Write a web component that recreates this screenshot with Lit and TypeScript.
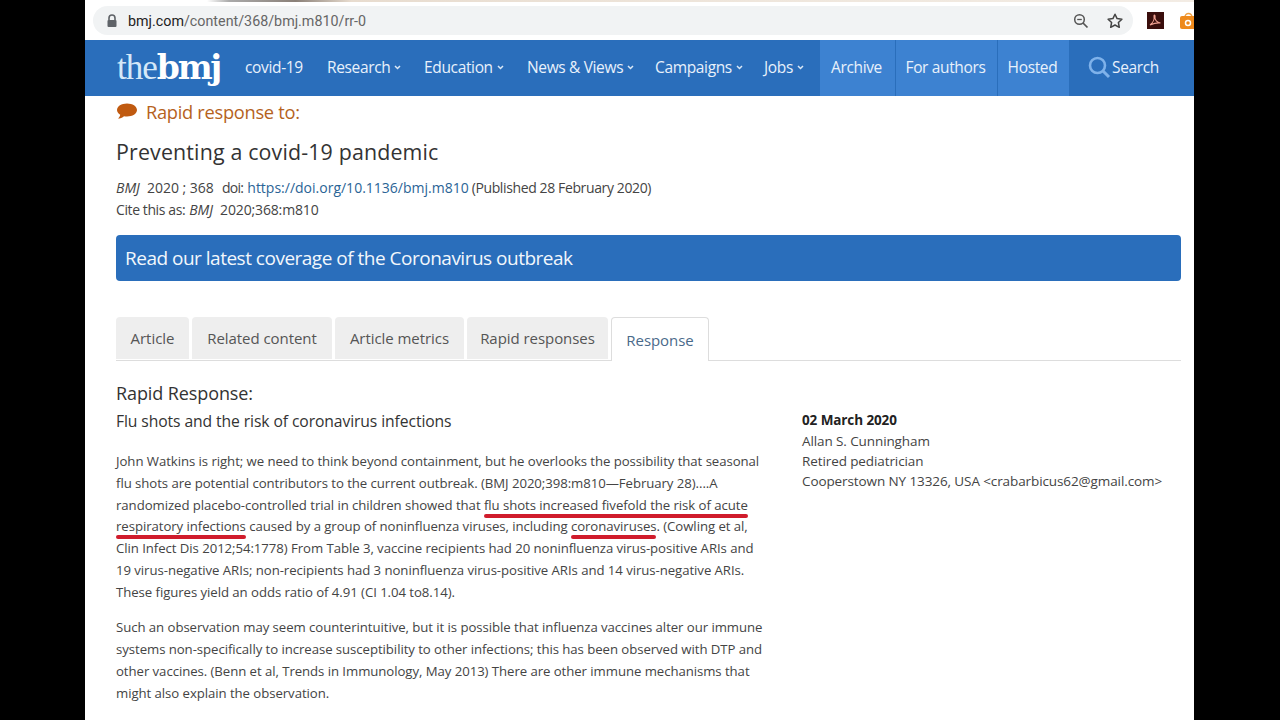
import { LitElement, html, css, svg } from "lit";
import { customElement } from "lit/decorators.js";

@customElement("app-root")
export class AppRoot extends LitElement {
  static styles = css`
    :host { display: block; width: 1280px; height: 720px; background: #000; overflow: hidden; font-family: "Open Sans", "Noto Sans", sans-serif; }
    .page { width: 1109px; height: 720px; margin-left: 85px; background: #fff; overflow: hidden; display: flex; flex-direction: column; }
    .chrome { height: 40px; flex: none; background: linear-gradient(90deg, #fff 11%, #aaa 13%, #8a8078 19%, #e8dccf 24%, #efe6dc 60%, #f3ece4 100%) top left / 100% 2px no-repeat, #fff; display: flex; align-items: flex-end; padding: 0 0 5px 8px; box-sizing: border-box; overflow: hidden; }
    .omni { width: 1040px; height: 29px; background: #f1f3f4; border-radius: 15px; display: flex; align-items: center; flex: none; }
    .lock { margin-left: 13px; width: 12px; height: 14px; }
    .url { margin-left: 10px; font: 14.3px "Roboto", sans-serif; color: #666; flex: 1; }
    .url b { font-weight: 400; color: #222; }
    .omni svg.z { width: 18px; height: 18px; margin-right: 16px; }
    .omni svg.s { width: 18px; height: 18px; margin-right: 9px; }
    .ext { display: flex; gap: 16px; margin-left: 14px; height: 29px; align-items: center; flex: none; }
    .ext svg { width: 17px; height: 17px; flex: none; }
    nav { height: 56px; flex: none; background: #2a6ebb; display: flex; align-items: center; color: #e8f1fb; font-size: 15.5px; letter-spacing: -0.35px; }
    .logo { margin-left: 32px; width: 128px; flex: none; display: flex; align-items: baseline; color: #d5e8f8; font: 35px "Liberation Serif", serif; letter-spacing: -1px; height: 56px; line-height: 55px; }
    .logo b { color: #fff; font: 900 33px "DejaVu Serif", serif; letter-spacing: -2.2px; }
    .item { display: flex; align-items: center; height: 56px; padding-bottom: 2px; box-sizing: border-box; white-space: nowrap; flex: none; }
    .caret { width: 7px; height: 5px; margin-left: 4px; }
    .light { background: #3d82d1; border-left: 1px solid #2a6ebb; padding-right: 2px; justify-content: center; flex: none; }
    .search { flex: 1; padding-left: 18px; gap: 1px; }
    .search svg { width: 24px; height: 24px; }
    main { padding: 0 13px 0 31px; flex: 1; min-height: 0; }
    .rr { display: flex; align-items: center; height: 32px; padding-bottom: 2px; box-sizing: border-box; color: #b5621d; font-size: 18.3px; letter-spacing: -0.3px; }
    .rr svg { width: 22px; height: 20px; margin-right: 8px; }
    h1 { font-weight: 400; font-size: 21.4px; color: #333; margin: 9px 0 0; line-height: 29px; letter-spacing: 0.15px; }
    .meta { margin-top: 11px; font-size: 14px; line-height: 22px; color: #444; letter-spacing: 0; white-space: nowrap; }
    .meta div { display: flex; }
    .meta i { margin-right: 7px; }
    .meta span { margin-right: 8px; }
    .meta a { color: #2a6496; margin-right: 3px; }
    .meta .l { margin-right: 4px; letter-spacing: -0.7px; }
    .meta .pub { letter-spacing: -0.38px; }
    .meta .cite { margin-right: 4px; letter-spacing: -0.4px; }
    .meta .yr { letter-spacing: -0.15px; }
    .banner { margin-top: 14px; height: 46px; background: #2a6ebb; border-radius: 4px; color: #f2f7fc; font-size: 19px; letter-spacing: -0.5px; display: flex; align-items: center; padding-left: 9px; }
    .tabs { margin-top: 36px; display: flex; gap: 3px; height: 43px; border-bottom: 1px solid #ddd; box-sizing: content-box; }
    .tab { background: #eee; border-radius: 4px 4px 0 0; display: flex; align-items: center; justify-content: center; font-size: 15px; color: #555; letter-spacing: -0.05px; height: 42px; flex: none; box-sizing: border-box; }
    .tab.on { background: #fff; border: 1px solid #ddd; border-bottom: 0; height: 44px; color: #4a6a8a; }
    .cols { display: flex; margin-top: 19px; }
    .left { width: 686px; flex: none; }
    .right { margin-top: 30px; font-size: 13.5px; line-height: 20px; color: #444; letter-spacing: -0.1px; white-space: nowrap; }
    .right strong { display: block; color: #222; font-weight: 700; line-height: 21px; }
    h2 { font-weight: 400; font-size: 18px; margin: 0; color: #333; line-height: 26px; letter-spacing: -0.1px; }
    h3 { font-weight: 400; font-size: 15.7px; margin: 3px 0 0; color: #333; line-height: 24px; letter-spacing: -0.1px; }
    .p { margin-top: 18px; font-size: 13.2px; line-height: 21.8px; color: #444; letter-spacing: -0.06px; white-space: nowrap; }
    .p + .p { margin-top: 13.7px; }
    .u { position: relative; }
    .u::after { content: ""; position: absolute; left: 0; right: 0; bottom: -4px; height: 4px; border-radius: 2px; background: #d01c2c; }
  `;

  render() {
    const caret = svg`<svg class="caret" viewBox="0 0 7 5"><path d="M1 1l2.5 2.5L6 1" fill="none" stroke="#dbe8f6" stroke-width="1.5"/></svg>`;
    const navItem = (t: string, w: number, c = true) =>
      html`<div class="item" style="width:${w}px">${t}${c ? caret : ""}</div>`;
    const tab = (t: string, w: number, on = false) =>
      html`<div class="tab ${on ? "on" : ""}" style="width:${w}px">${t}</div>`;
    return html`<div class="page">
      <div class="chrome">
        <div class="omni">
          <svg class="lock" viewBox="0 0 12 14"><path d="M3 6V4a3 3 0 0 1 6 0v2" fill="none" stroke="#5f6368" stroke-width="1.6"/><rect x="1.5" y="6" width="9" height="7" rx="1" fill="#5f6368"/></svg>
          <div class="url"><b>bmj.com</b>/content/368/bmj.m810/rr-0</div>
          <svg class="z" viewBox="0 0 18 18"><circle cx="7.5" cy="7.5" r="4.8" fill="none" stroke="#555" stroke-width="1.5"/><path d="M11 11l4.5 4.5" stroke="#555" stroke-width="1.7"/><path d="M5.2 7.5h4.6" stroke="#555" stroke-width="1.3"/></svg>
          <svg class="s" viewBox="0 0 18 18"><path d="M9 2.2l2.1 4.4 4.8.6-3.5 3.3.9 4.8L9 13l-4.3 2.3.9-4.8-3.5-3.3 4.8-.6z" fill="none" stroke="#444" stroke-width="1.5" stroke-linejoin="round"/></svg>
        </div>
        <div class="ext">
          <svg viewBox="0 0 17 17"><rect width="17" height="17" fill="#3a0e0c"/><path d="M3 13c3-2 4.500-6 4-9 0-1.500 1.500-1 1 1-.5 3 2 5.500 5.500 6-3-.5-7 .5-10.500 2z" fill="none" stroke="#f0a090" stroke-width="1.100"/></svg>
          <svg viewBox="0 0 17 17"><path d="M5 5a3.500 3.500 0 0 1 7 0" fill="none" stroke="#f0a040" stroke-width="1.500"/><rect y="4" width="17" height="13" rx="2" fill="#ee8a1c"/><circle cx="8" cy="11" r="2.500" fill="none" stroke="#fff" stroke-width="1.500"/></svg>
        </div>
      </div>
      <nav>
        <div class="logo">the<b>bmj</b></div>
        ${navItem("covid-19", 82, false)}
        ${navItem("Research", 97)}
        ${navItem("Education", 103)}
        ${navItem("News & Views", 128)}
        ${navItem("Campaigns", 109)}
        ${navItem("Jobs", 55)}
        <div class="item light" style="width:76px">Archive</div>
        <div class="item light" style="width:102px">For authors</div>
        <div class="item light" style="width:72px">Hosted</div>
        <div class="item search">
          <svg viewBox="0 0 24 24"><circle cx="10.500" cy="10.500" r="7.500" fill="none" stroke="#7fb2ea" stroke-width="2.600"/><path d="M16 16l6 6" stroke="#7fb2ea" stroke-width="3"/></svg>
          Search
        </div>
      </nav>
      <main>
        <div class="rr">
          <svg viewBox="0 0 22 19"><path d="M11 2c5.500 0 10 2.800 10 6.500S16.500 15 11 15c-1 0-2-.1-3-.3C6.500 16.500 4 17 2 17c1.200-1 2-2.200 2.200-3.800C2.200 12 1 10.300 1 8.500 1 4.800 5.500 2 11 2z" fill="#c05a10"/></svg>
          Rapid response to:
        </div>
        <h1>Preventing a covid-19 pandemic</h1>
        <div class="meta">
          <div><i>BMJ</i><span>2020 ; 368</span><span class="l">doi:</span><a>https://doi.org/10.1136/bmj.m810</a><span class="pub">(Published 28 February 2020)</span></div>
          <div><span class="cite">Cite this as:</span><i>BMJ</i><span class="yr">2020;368:m810</span></div>
        </div>
        <div class="banner">Read our latest coverage of the Coronavirus outbreak</div>
        <div class="tabs">
          ${tab("Article", 73)}${tab("Related content", 140)}${tab("Article metrics", 129)}${tab("Rapid responses", 141)}${tab("Response", 98, true)}
        </div>
        <div class="cols">
          <div class="left">
            <h2>Rapid Response:</h2>
            <h3>Flu shots and the risk of coronavirus infections</h3>
            <div class="p">
              John Watkins is right; we need to think beyond containment, but he overlooks the possibility that seasonal<br>
              flu shots are potential contributors to the current outbreak. (BMJ 2020;398:m810—February 28)....A<br>
              randomized placebo-controlled trial in children showed that <span class="u">flu shots increased fivefold the risk of acute</span><br>
              <span class="u">respiratory infections</span> caused by a group of noninfluenza viruses, including <span class="u">coronaviruses</span>. (Cowling et al,<br>
              Clin Infect Dis 2012;54:1778) From Table 3, vaccine recipients had 20 noninfluenza virus-positive ARIs and<br>
              19 virus-negative ARIs; non-recipients had 3 noninfluenza virus-positive ARIs and 14 virus-negative ARIs.<br>
              These figures yield an odds ratio of 4.91 (CI 1.04 to8.14).
            </div>
            <div class="p">
              Such an observation may seem counterintuitive, but it is possible that influenza vaccines alter our immune<br>
              systems non-specifically to increase susceptibility to other infections; this has been observed with DTP and<br>
              other vaccines. (Benn et al, Trends in Immunology, May 2013) There are other immune mechanisms that<br>
              might also explain the observation.
            </div>
          </div>
          <div class="right">
            <strong>02 March 2020</strong>
            Allan S. Cunningham<br>
            Retired pediatrician<br>
            Cooperstown NY 13326, USA &lt;crabarbicus62@gmail.com&gt;
          </div>
        </div>
      </main>
    </div>`;
  }
}
